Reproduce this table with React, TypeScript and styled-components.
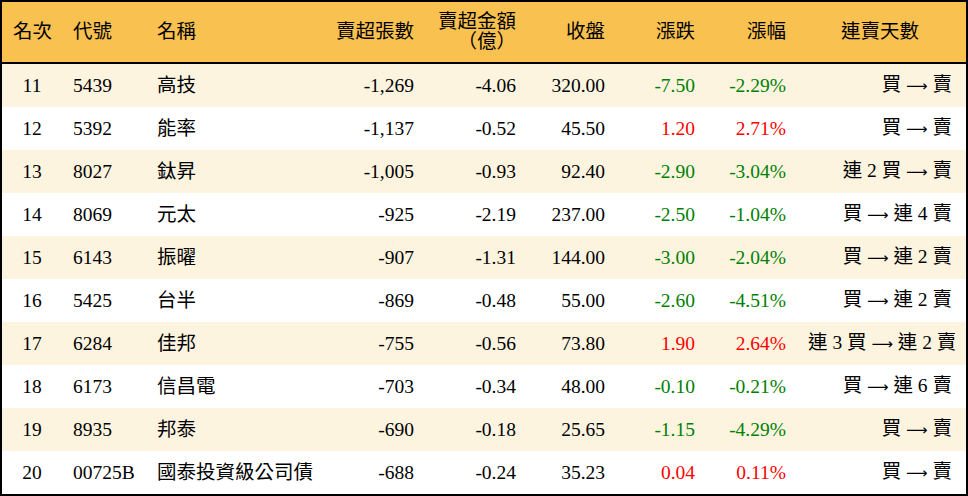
import React from "react";
import styled, { createGlobalStyle } from "styled-components";

const GlobalStyle = createGlobalStyle`
  html, body {
    margin: 0;
    padding: 0;
    background: #ffffff;
  }
  body {
    font-family: "Liberation Serif", "Noto Sans CJK TC", serif;
  }
`;

const COLUMNS = "60px 84px 169px 110px 102px 89px 90px 91px 1fr";

const Board = styled.div`
  box-sizing: border-box;
  width: 968px;
  height: 496px;
  border: 2px solid #000;
  display: flex;
  flex-direction: column;
  color: #000;
  font-size: 19.5px;
`;

const HeaderRow = styled.div`
  display: grid;
  grid-template-columns: ${COLUMNS};
  align-items: center;
  height: 60px;
  background: #f8c150;
  border-bottom: 2px solid #000;
`;

const Row = styled.div<{ $striped: boolean }>`
  display: grid;
  grid-template-columns: ${COLUMNS};
  align-items: center;
  height: 43px;
  background: ${(p) => (p.$striped ? "#fdf4e0" : "#ffffff")};
`;

const Cell = styled.div<{ $align?: "left" | "right" | "center"; $tone?: "up" | "down" }>`
  padding: 0 11px;
  text-align: ${(p) => p.$align ?? "left"};
  white-space: nowrap;
  line-height: 20px;
  color: ${(p) => (p.$tone === "up" ? "#ff0000" : p.$tone === "down" ? "#008000" : "#000")};

  &:last-child {
    padding-right: 14px;
  }
`;

const Arrow = styled.span`
  font-family: "DejaVu Sans", sans-serif;
  font-size: 15px;
`;

type Item = {
  rank: number;
  code: string;
  name: string;
  lots: string;
  amount: string;
  close: string;
  change: string;
  pct: string;
  bought: string;
  sold: string;
};

const items: Item[] = [
  { rank: 11, code: "5439", name: "高技", lots: "-1,269", amount: "-4.06", close: "320.00", change: "-7.50", pct: "-2.29%", bought: "買", sold: "賣" },
  { rank: 12, code: "5392", name: "能率", lots: "-1,137", amount: "-0.52", close: "45.50", change: "1.20", pct: "2.71%", bought: "買", sold: "賣" },
  { rank: 13, code: "8027", name: "鈦昇", lots: "-1,005", amount: "-0.93", close: "92.40", change: "-2.90", pct: "-3.04%", bought: "連 2 買", sold: "賣" },
  { rank: 14, code: "8069", name: "元太", lots: "-925", amount: "-2.19", close: "237.00", change: "-2.50", pct: "-1.04%", bought: "買", sold: "連 4 賣" },
  { rank: 15, code: "6143", name: "振曜", lots: "-907", amount: "-1.31", close: "144.00", change: "-3.00", pct: "-2.04%", bought: "買", sold: "連 2 賣" },
  { rank: 16, code: "5425", name: "台半", lots: "-869", amount: "-0.48", close: "55.00", change: "-2.60", pct: "-4.51%", bought: "買", sold: "連 2 賣" },
  { rank: 17, code: "6284", name: "佳邦", lots: "-755", amount: "-0.56", close: "73.80", change: "1.90", pct: "2.64%", bought: "連 3 買", sold: "連 2 賣" },
  { rank: 18, code: "6173", name: "信昌電", lots: "-703", amount: "-0.34", close: "48.00", change: "-0.10", pct: "-0.21%", bought: "買", sold: "連 6 賣" },
  { rank: 19, code: "8935", name: "邦泰", lots: "-690", amount: "-0.18", close: "25.65", change: "-1.15", pct: "-4.29%", bought: "買", sold: "賣" },
  { rank: 20, code: "00725B", name: "國泰投資級公司債", lots: "-688", amount: "-0.24", close: "35.23", change: "0.04", pct: "0.11%", bought: "買", sold: "賣" },
];

const toneOf = (v: string) => (v.startsWith("-") ? "down" : "up");

export default function App() {
  return (
    <>
      <GlobalStyle />
      <Board>
        <HeaderRow>
          <Cell $align="center">名次</Cell>
          <Cell>代號</Cell>
          <Cell>名稱</Cell>
          <Cell $align="right">賣超張數</Cell>
          <Cell $align="right">
            賣超金額
            <br />
            （億）
          </Cell>
          <Cell $align="right">收盤</Cell>
          <Cell $align="right">漲跌</Cell>
          <Cell $align="right">漲幅</Cell>
          <Cell $align="center">連賣天數</Cell>
        </HeaderRow>
        {items.map((it, i) => (
          <Row key={it.rank} $striped={i % 2 === 0}>
            <Cell $align="center">{it.rank}</Cell>
            <Cell>{it.code}</Cell>
            <Cell>{it.name}</Cell>
            <Cell $align="right">{it.lots}</Cell>
            <Cell $align="right">{it.amount}</Cell>
            <Cell $align="right">{it.close}</Cell>
            <Cell $align="right" $tone={toneOf(it.change)}>
              {it.change}
            </Cell>
            <Cell $align="right" $tone={toneOf(it.pct)}>
              {it.pct}
            </Cell>
            <Cell $align="right">
              {it.bought} <Arrow>⟶</Arrow> {it.sold}
            </Cell>
          </Row>
        ))}
      </Board>
    </>
  );
}
